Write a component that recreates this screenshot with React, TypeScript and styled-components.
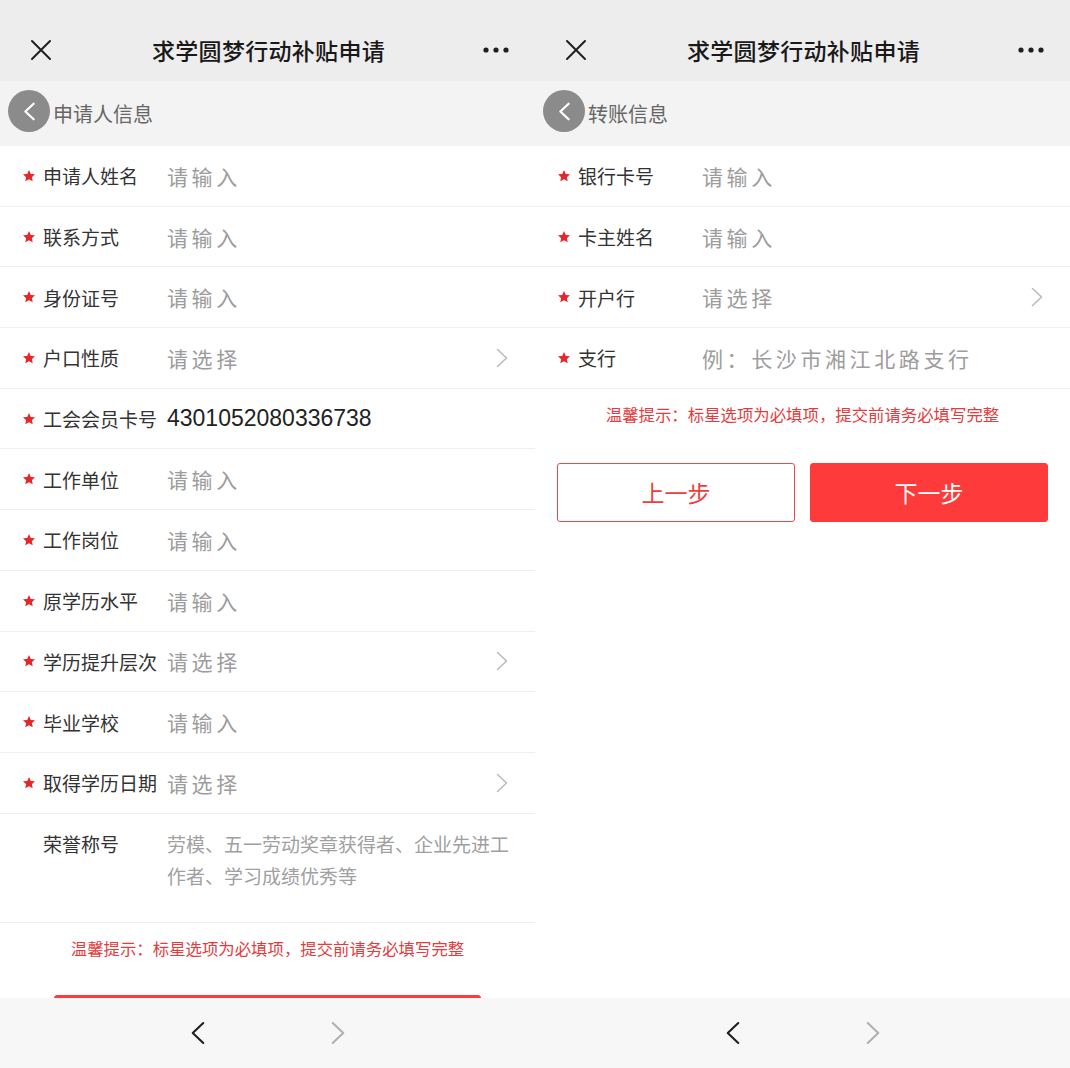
import React from 'react'
import styled, { createGlobalStyle } from 'styled-components'

const GlobalStyle = createGlobalStyle`
  html, body {
    margin: 0;
    padding: 0;
    background: #ffffff;
  }
  body {
    font-family: "Noto Sans CJK SC", "Noto Sans", "Liberation Sans", sans-serif;
    -webkit-font-smoothing: antialiased;
  }
  * {
    box-sizing: border-box;
  }
`

const Screens = styled.div`
  display: flex;
  flex-direction: row;
  width: 1070px;
  height: 1068px;
`

const Phone = styled.div`
  position: relative;
  display: flex;
  flex-direction: column;
  width: 535px;
  height: 1068px;
  background: #ffffff;
  overflow: hidden;
`

const Header = styled.div`
  display: flex;
  align-items: center;
  justify-content: space-between;
  height: 81px;
  padding: 18px 26px 0 28px;
  background: #ededed;
  flex-shrink: 0;
`

const HeaderButton = styled.div`
  width: 26px;
  height: 26px;
  display: flex;
  align-items: center;
  justify-content: center;
`

const Title = styled.div`
  flex: 1;
  text-align: center;
  font-size: 23px;
  font-weight: 500;
  color: #191919;
  letter-spacing: 0.3px;
`

const Content = styled.div`
  flex: 1;
  min-height: 0;
  overflow: hidden;
`

const SectionHeader = styled.div`
  height: 65px;
  display: flex;
  align-items: center;
  padding-left: 53px;
  background: #f3f3f3;
  font-size: 20px;
  color: #666666;
`

const FloatBack = styled.div`
  position: absolute;
  left: 8px;
  top: 90px;
  width: 42px;
  height: 42px;
  border-radius: 50%;
  background: rgba(120, 120, 120, 0.85);
  display: flex;
  align-items: center;
  justify-content: center;
`

const Row = styled.div<{ tall?: boolean }>`
  display: flex;
  align-items: ${(p) => (p.tall ? 'flex-start' : 'center')};
  height: ${(p) => (p.tall ? '109px' : '60.7px')};
  padding: ${(p) => (p.tall ? '14px 24px 0 22px' : '0 27px 0 22px')};
  border-bottom: 1px solid #efefef;
`

const StarBox = styled.div`
  width: 21px;
  flex-shrink: 0;
  display: flex;
  align-items: center;
  line-height: 0;
`

const Label = styled.div<{ tall?: boolean }>`
  width: 124px;
  flex-shrink: 0;
  font-size: 19px;
  color: #333333;
  white-space: nowrap;
  line-height: ${(p) => (p.tall ? '32px' : 'normal')};
`

const Value = styled.div<{ filled?: boolean }>`
  flex: 1;
  font-size: ${(p) => (p.filled ? '23px' : '21px')};
  color: ${(p) => (p.filled ? '#222222' : '#9c9c9c')};
  letter-spacing: ${(p) => (p.filled ? '0' : '3.6px')};
  font-family: ${(p) =>
    p.filled
      ? '"Liberation Sans", "Noto Sans CJK SC", sans-serif'
      : '"Noto Sans CJK SC", sans-serif'};
  white-space: nowrap;
`

const Placeholder = styled.div`
  flex: 1;
  font-size: 19px;
  line-height: 32px;
  color: #a0a0a0;
`

const Tip = styled.div`
  padding: 14px 0 38px;
  text-align: center;
  font-size: 16.4px;
  line-height: 22px;
  color: #e63a3c;
`

const ButtonRow = styled.div<{ single?: boolean }>`
  display: flex;
  gap: 15px;
  margin-top: ${(p) => (p.single ? '-2px' : '0')};
  padding: ${(p) => (p.single ? '0 54px' : '0 22px')};
`

const ActionButton = styled.div<{ primary?: boolean }>`
  flex: 1;
  height: 59px;
  display: flex;
  align-items: center;
  justify-content: center;
  border-radius: 3px;
  font-size: 23px;
  border: 1.5px solid #ef4a4a;
  color: ${(p) => (p.primary ? '#ffffff' : '#f03c3c')};
  background: ${(p) => (p.primary ? '#fe3a3a' : '#ffffff')};
  border-color: ${(p) => (p.primary ? '#fe3a3a' : '#ef4a4a')};
`

const BottomBar = styled.div`
  height: 70px;
  flex-shrink: 0;
  display: flex;
  align-items: center;
  justify-content: center;
  gap: 126px;
  background: #f7f7f7;
`

const Star = () => (
  <svg width="14" height="14" viewBox="0 0 24 24">
    <path
      d="M12 1.8l3.05 6.6 7.2.8-5.35 4.9 1.5 7.1L12 17.6l-6.4 3.6 1.5-7.1L1.75 9.2l7.2-.8z"
      fill="#e5262b"
    />
  </svg>
)

const Chevron = ({ dir = 'right', color = '#bbbbbb', w = 12, h = 20, sw = 1.6 }: {
  dir?: 'left' | 'right'
  color?: string
  w?: number
  h?: number
  sw?: number
}) => (
  <svg width={w} height={h} viewBox="0 0 12 20">
    <path
      d={dir === 'right' ? 'M1.5 1.5L10.5 10 1.5 18.5' : 'M10.5 1.5L1.5 10 10.5 18.5'}
      fill="none"
      stroke={color}
      strokeWidth={sw}
      strokeLinecap="round"
      strokeLinejoin="round"
    />
  </svg>
)

const CloseIcon = () => (
  <svg width="22" height="22" viewBox="0 0 22 22">
    <path d="M2 2L20 20M20 2L2 20" stroke="#1f1f1f" strokeWidth="2" strokeLinecap="round" />
  </svg>
)

const MoreIcon = () => (
  <svg width="26" height="6" viewBox="0 0 26 6">
    <circle cx="3" cy="3" r="2.6" fill="#1f1f1f" />
    <circle cx="13" cy="3" r="2.6" fill="#1f1f1f" />
    <circle cx="23" cy="3" r="2.6" fill="#1f1f1f" />
  </svg>
)

interface FieldProps {
  label: string
  value?: string
  placeholder?: string
  select?: boolean
  required?: boolean
}

const Field = ({ label, value, placeholder = '请输入', select, required = true }: FieldProps) => (
  <Row>
    <StarBox>{required && <Star />}</StarBox>
    <Label>{label}</Label>
    {value ? <Value filled>{value}</Value> : <Value>{placeholder}</Value>}
    {select && <Chevron />}
  </Row>
)

const PhoneFrame = ({ section, children }: { section: string; children: React.ReactNode }) => (
  <Phone>
    <Header>
      <HeaderButton>
        <CloseIcon />
      </HeaderButton>
      <Title>求学圆梦行动补贴申请</Title>
      <HeaderButton>
        <MoreIcon />
      </HeaderButton>
    </Header>
    <Content>
      <SectionHeader>{section}</SectionHeader>
      {children}
    </Content>
    <FloatBack>
      <Chevron dir="left" color="#ffffff" w={11} h={19} sw={2.4} />
    </FloatBack>
    <BottomBar>
      <Chevron dir="left" color="#1f1f1f" w={14} h={24} sw={1.8} />
      <Chevron dir="right" color="#b0b0b0" w={14} h={24} sw={1.8} />
    </BottomBar>
  </Phone>
)

const tipText = '温馨提示：标星选项为必填项，提交前请务必填写完整'

export default function App() {
  return (
    <>
      <GlobalStyle />
      <Screens>
        <PhoneFrame section="申请人信息">
          <Field label="申请人姓名" />
          <Field label="联系方式" />
          <Field label="身份证号" />
          <Field label="户口性质" placeholder="请选择" select />
          <Field label="工会会员卡号" value="4301052080336738" />
          <Field label="工作单位" />
          <Field label="工作岗位" />
          <Field label="原学历水平" />
          <Field label="学历提升层次" placeholder="请选择" select />
          <Field label="毕业学校" />
          <Field label="取得学历日期" placeholder="请选择" select />
          <Row tall>
            <StarBox />
            <Label tall>荣誉称号</Label>
            <Placeholder>劳模、五一劳动奖章获得者、企业先进工作者、学习成绩优秀等</Placeholder>
          </Row>
          <Tip>{tipText}</Tip>
          <ButtonRow single>
            <ActionButton primary aria-label="提交" />
          </ButtonRow>
        </PhoneFrame>
        <PhoneFrame section="转账信息">
          <Field label="银行卡号" />
          <Field label="卡主姓名" />
          <Field label="开户行" placeholder="请选择" select />
          <Field label="支行" placeholder="例：长沙市湘江北路支行" />
          <Tip>{tipText}</Tip>
          <ButtonRow>
            <ActionButton>上一步</ActionButton>
            <ActionButton primary>下一步</ActionButton>
          </ButtonRow>
        </PhoneFrame>
      </Screens>
    </>
  )
}
